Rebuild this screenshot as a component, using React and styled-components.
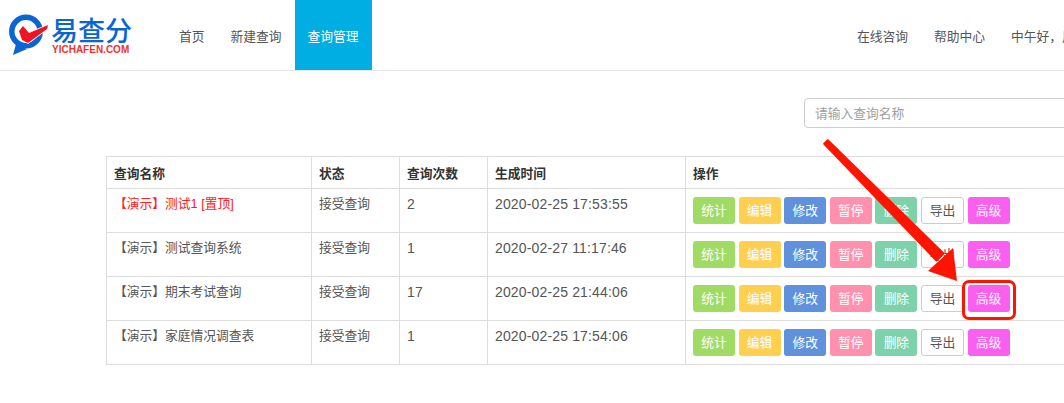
import styled, { createGlobalStyle } from "styled-components";

const GlobalStyle = createGlobalStyle`
  html, body {
    margin: 0;
    padding: 0;
    background: #fff;
    overflow: hidden;
  }
  body {
    font-family: "Liberation Sans", "Noto Sans CJK SC", sans-serif;
    font-size: 12.75px;
    color: #555;
  }
`;

const rows = [
  { name: "测试1 [置顶]", top: true, state: "接受查询", count: 2, time: "2020-02-25 17:53:55" },
  { name: "测试查询系统", state: "接受查询", count: 1, time: "2020-02-27 11:17:46" },
  { name: "期末考试查询", state: "接受查询", count: 17, time: "2020-02-25 21:44:06" },
  { name: "家庭情况调查表", state: "接受查询", count: 1, time: "2020-02-25 17:54:06" },
];

const actions = [
  { label: "统计", color: "#a0dc64" },
  { label: "编辑", color: "#ffd050" },
  { label: "修改", color: "#5f91dc" },
  { label: "暂停", color: "#ff91af" },
  { label: "删除", color: "#7dd2aa" },
  { label: "导出", outline: true },
  { label: "高级", color: "#fa5ff0" },
];

function Logo() {
  return (
    <LogoBox>
      <svg width="43" height="42" viewBox="9 13 43 42">
        <circle cx="26" cy="30.5" r="14.2" fill="none" stroke="#0a64d2" strokeWidth="5.5" />
        <path d="M16 43L13 54L27 48z" fill="#0a64d2" />
        <path d="M19 30L23 25L29 32L48 24L47 28L28 42L22 39z" fill="#f01423" stroke="#fff" strokeWidth="1.5" paintOrder="stroke" />
      </svg>
      <LogoText>
        <LogoName>易查分</LogoName>
        <LogoLatin>YICHAFEN.COM</LogoLatin>
      </LogoText>
    </LogoBox>
  );
}

export default function App() {
  return (
    <Page>
      <GlobalStyle />
      <Header>
        <Logo />
        <Nav>
          <NavItem>首页</NavItem>
          <NavItem>新建查询</NavItem>
          <NavItem $active>查询管理</NavItem>
        </Nav>
        <RightNav>
          <NavItem>在线咨询</NavItem>
          <NavItem>帮助中心</NavItem>
          <NavItem>中午好，用户</NavItem>
        </RightNav>
      </Header>

      <Main>
        <SearchRow>
          <SearchInput placeholder="请输入查询名称" />
        </SearchRow>
        <Table>
          <colgroup>
            <col width="205" />
            <col width="88" />
            <col width="88" />
            <col width="198" />
            <col width="440" />
          </colgroup>
          <thead>
            <tr>
              <Th>查询名称</Th>
              <Th>状态</Th>
              <Th>查询次数</Th>
              <Th>生成时间</Th>
              <Th>操作</Th>
            </tr>
          </thead>
          <tbody>
            {rows.map((row) => (
              <tr key={row.name}>
                <Td $top={row.top}>
                  <DemoTag>【 演示 】</DemoTag>
                  {row.name}
                </Td>
                <Td>{row.state}</Td>
                <NumberCell>{row.count}</NumberCell>
                <NumberCell>{row.time}</NumberCell>
                <ActionCell>
                  <Actions>
                    {actions.map((action) => (
                      <ActionButton key={action.label} $color={action.color} $outline={action.outline}>
                        {action.label}
                      </ActionButton>
                    ))}
                  </Actions>
                </ActionCell>
              </tr>
            ))}
          </tbody>
        </Table>
      </Main>

      {/* annotation drawn on top of the screenshot */}
      <Annotation width="1064" height="403" viewBox="0 0 1064 403">
        <path
          d="M827.8 140.2L943.5 253.5L936.5 260.5L824.2 143.8z"
          fill="#ff1400"
          stroke="#ff1400"
          strokeWidth="2"
          strokeLinejoin="round"
        />
        <path d="M928 271L957 281L953 248z" fill="#ff1400" />
      </Annotation>
      <Highlight />
    </Page>
  );
}

const Page = styled.div`
  position: relative;
  width: 1064px;
  height: 403px;
  overflow: hidden;
`;

const Header = styled.header`
  display: flex;
  align-items: stretch;
  width: 1200px;
  height: 70px;
  border-bottom: 1px solid #e6e6e6;
`;

const LogoBox = styled.div`
  display: flex;
  align-items: center;
  width: 166px;
  padding-left: 9px;
  box-sizing: border-box;
`;

const LogoText = styled.div`
  display: flex;
  flex-direction: column;
  align-items: flex-start;
  gap: 1px;
`;

const LogoName = styled.span`
  font-family: "Noto Sans CJK SC", sans-serif;
  font-size: 27px;
  line-height: 27px;
  font-weight: 500;
  color: #0a64d2;
  margin-left: -1px;
`;

const LogoLatin = styled.span`
  font-size: 10px;
  line-height: 11px;
  font-weight: 700;
  color: #f0322d;
`;

const Nav = styled.nav`
  display: flex;
`;

const RightNav = styled.nav`
  display: flex;
  margin-left: 472.5px;
`;

const NavItem = styled.a`
  display: flex;
  align-items: center;
  padding: 0 13px;
  color: ${(props) => (props.$active ? "#fff" : "#555")};
  background: ${(props) => (props.$active ? "#00aee3" : "transparent")};
  white-space: nowrap;
`;

const Main = styled.main`
  width: 1200px;
  padding: 27px 0 0 106px;
  box-sizing: border-box;
`;

const SearchRow = styled.div`
  display: flex;
  padding-left: 698px;
  margin-bottom: 28px;
`;

const SearchInput = styled.input`
  width: 300px;
  height: 30px;
  box-sizing: border-box;
  padding: 0 10px;
  border: 1px solid #ccc;
  border-radius: 4px;
  font: inherit;
  outline: none;

  &::placeholder {
    color: #a0a0a0;
  }
`;

const Table = styled.table`
  width: 1019px;
  table-layout: fixed;
  border-collapse: collapse;
`;

const Th = styled.th`
  height: 32px;
  padding: 0 7px;
  box-sizing: border-box;
  border: 1px solid #ddd;
  font-weight: 700;
  color: #333;
  text-align: left;
`;

const Td = styled.td`
  height: 44px;
  padding: 7px 7px 0;
  box-sizing: border-box;
  border: 1px solid #ddd;
  vertical-align: top;
  line-height: 16px;
  color: ${(props) => (props.$top ? "#ff2020" : "#555")};
`;

const DemoTag = styled.span`
  word-spacing: -3.5px;
`;

const NumberCell = styled(Td)`
  font-size: 14px;
  letter-spacing: 0.15px;
`;

const ActionCell = styled(Td)`
  padding: 8px 7px 0;
`;

const Actions = styled.div`
  display: flex;
  gap: 3.6px;
`;

const ActionButton = styled.button`
  width: ${(props) => (props.$outline ? "43px" : "42px")};
  height: 27px;
  padding: 0;
  box-sizing: border-box;
  border: 1px solid ${(props) => (props.$outline ? "#ccc" : "transparent")};
  border-radius: 3px;
  background: ${(props) => (props.$outline ? "#fff" : props.$color)};
  color: ${(props) => (props.$outline ? "#555" : "#fff")};
  font: inherit;
`;

const Annotation = styled.svg`
  position: absolute;
  top: 0;
  left: 0;
  pointer-events: none;
`;

const Highlight = styled.div`
  position: absolute;
  left: 962px;
  top: 280px;
  width: 54px;
  height: 40px;
  box-sizing: border-box;
  border: 3px solid #ff1400;
  border-radius: 7px;
`;
